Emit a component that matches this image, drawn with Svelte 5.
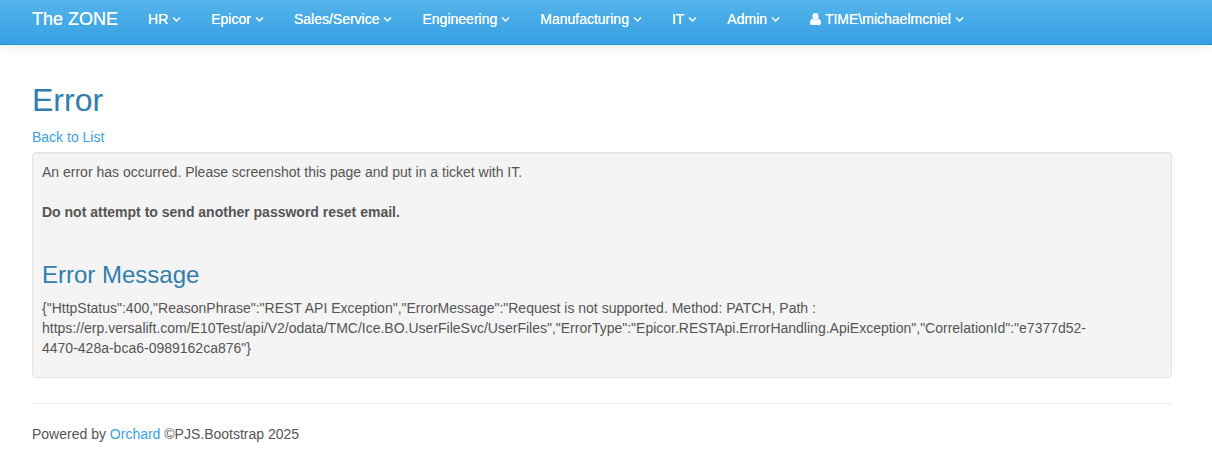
<script>
    const menus = ["HR", "Epicor", "Sales/Service", "Engineering", "Manufacturing", "IT", "Admin"];
</script>

{#snippet caret()}
    <svg class="caret" viewBox="0 0 9 7" width="9.1" height="7" aria-hidden="true">
        <path d="M1 1.4 4.5 4.9 8 1.4" fill="none" stroke="currentColor" stroke-width="1.4" />
    </svg>
{/snippet}

<nav class="navbar">
    <a class="brand" href="#top">The ZONE</a>
    <ul class="menu">
        {#each menus as menu}
            <li><a href="#top">{menu} {@render caret()}</a></li>
        {/each}
        <li>
            <a href="#top">
                <svg class="user" viewBox="0 0 11 12" width="11" height="12" aria-hidden="true">
                    <ellipse cx="5.5" cy="3.4" rx="3" ry="3.4" fill="currentColor" />
                    <path d="M0 10.2C0 8 .6 5.9 2.4 5.7 3.2 6.5 4.3 7 5.5 7S7.8 6.5 8.6 5.7C10.4 5.9 11 8 11 10.2 11 11.4 10.2 12 9.2 12H1.8C.8 12 0 11.4 0 10.2Z" fill="currentColor" />
                </svg>
                TIME\michaelmcniel {@render caret()}
            </a>
        </li>
    </ul>
</nav>

<main class="container">
    <h1>Error</h1>
    <p class="back"><a href="#top">Back to List</a></p>
    <div class="well">
        <p>An error has occurred. Please screenshot this page and put in a ticket with IT.</p>
        <p class="warn"><b>Do not attempt to send another password reset email.</b></p>
        <h2>Error Message</h2>
        <p class="message">{`{"HttpStatus":400,"ReasonPhrase":"REST API Exception","ErrorMessage":"Request is not supported. Method: PATCH, Path : https://erp.versalift.com/E10Test/api/V2/odata/TMC/Ice.BO.UserFileSvc/UserFiles","ErrorType":"Epicor.RESTApi.ErrorHandling.ApiException","CorrelationId":"e7377d52-4470-428a-bca6-0989162ca876"}`}</p>
    </div>
    <hr />
    <footer>Powered by <a href="#top">Orchard</a> ©PJS.Bootstrap 2025</footer>
</main>

<style>
    :global(body) {
        background: #fff;
        color: #555;
        font-family: "Liberation Sans", Arial, sans-serif;
        font-size: 14px;
        line-height: 20px;
    }

    a {
        color: #3ba1e0;
        text-decoration: none;
    }

    .navbar {
        display: flex;
        align-items: center;
        height: 45px;
        box-sizing: border-box;
        padding: 0 32px 6px;
        background: linear-gradient(#54b4eb, #369fe3);
        border-bottom: 1px solid #2a8fd0;
        box-shadow: 0 1px 10px rgba(0, 0, 0, 0.1);
    }

    .brand {
        color: #fff;
        font-size: 18px;
        margin-right: 15px;
        text-shadow: 0 0 0.4px #fff;
    }

    .menu {
        display: flex;
        list-style: none;
        margin: 0;
        padding: 0;
    }

    .menu a {
        display: flex;
        align-items: center;
        gap: 3.9px;
        padding: 0 15px;
        color: #fff;
        text-shadow: 0 0 0.4px #fff;
    }

    .container {
        padding: 0 40px 0 32px;
    }

    h1 {
        color: #317eac;
        font-size: 32px;
        font-weight: 500;
        line-height: 35px;
        margin: 38px 0 9px;
    }

    .back {
        margin: 0 0 5px;
    }

    .well {
        background: #f4f4f4;
        border: 1px solid #e3e3e3;
        border-radius: 4px;
        box-shadow: inset 0 1px 1px rgba(0, 0, 0, 0.05);
        padding: 9px;
        height: 226px;
        box-sizing: border-box;
    }

    .well p {
        margin: 0;
    }

    .well .warn {
        margin-top: 20px;
    }

    h2 {
        color: #317eac;
        font-size: 24px;
        font-weight: 500;
        line-height: 26px;
        margin: 40px 0 10px;
    }

    .well .message {
        width: 1060px;
    }

    hr {
        border: 0;
        border-top: 1px solid #eee;
        margin: 25px 0 20px;
    }

    footer {
        padding-bottom: 17px;
    }
</style>
